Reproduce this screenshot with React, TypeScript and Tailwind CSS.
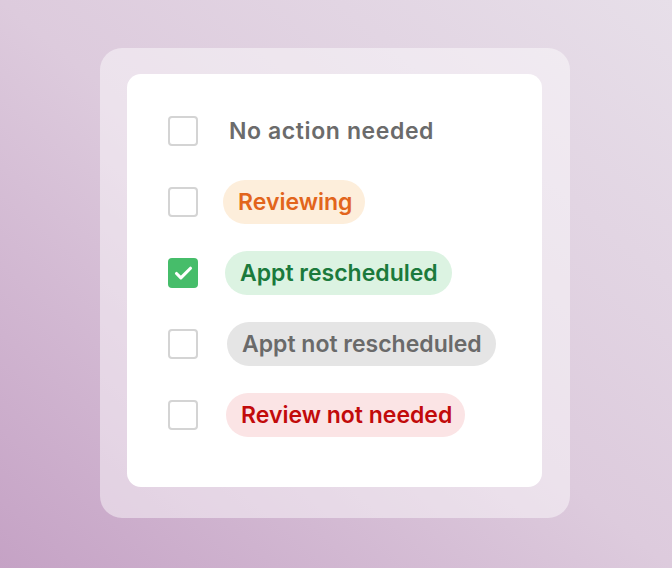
import { Check } from "lucide-react";

type Status = {
  label: string;
  pill: string;
  checked?: boolean;
};

const statuses: Status[] = [
  { label: "No action needed", pill: "ml-[31px] px-0 tracking-[0.6px] text-[#6b6b6b]" },
  { label: "Reviewing", pill: "ml-[25px] pl-[15px] pr-[13px] bg-[#fdeedb] text-[#e2651c]" },
  { label: "Appt rescheduled", pill: "ml-[27px] pl-[15px] pr-[14px] bg-[#dcf3e2] text-[#1b7a3c]", checked: true },
  { label: "Appt not rescheduled", pill: "ml-[29px] pl-[15px] pr-[14px] bg-[#e5e5e5] text-[#6a6a6a]" },
  { label: "Review not needed", pill: "ml-[28px] pl-[15px] pr-[13px] bg-[#fbe4e5] text-[#c20b0b]" },
];

function Checkbox({ checked }: { checked?: boolean }) {
  if (checked) {
    return (
      <span className="flex h-[30px] w-[30px] shrink-0 items-center justify-center rounded-[4px] bg-[#46bd6a]">
        <Check className="h-[21px] w-[21px] text-white" strokeWidth={3.6} />
      </span>
    );
  }
  return <span className="h-[30px] w-[30px] shrink-0 rounded-[4px] border-2 border-[#d4d4d4] bg-white" />;
}

export default function App() {
  return (
    <div
      className="h-[568px] w-[672px] bg-gradient-to-tr from-[#c5a2c5] via-[#ddcbdd] to-[#e7dfe9] pl-[100px] pt-[48px]"
      style={{ fontFamily: "Inter, 'Noto Sans', sans-serif" }}
    >
      <div className="h-[470px] w-[470px] rounded-[22px] bg-white/45 pl-[27px] pt-[26px]">
        <div className="flex h-[413px] w-[415px] flex-col gap-[27px] rounded-[14px] bg-white pl-[41px] pt-[35px]">
          {statuses.map((s) => (
            <div key={s.label} className="flex h-[44px] items-center">
              <Checkbox checked={s.checked} />
              <span
                className={`flex h-[44px] items-center rounded-full text-[23px] font-semibold ${s.pill}`}
              >
                {s.label}
              </span>
            </div>
          ))}
        </div>
      </div>
    </div>
  );
}
